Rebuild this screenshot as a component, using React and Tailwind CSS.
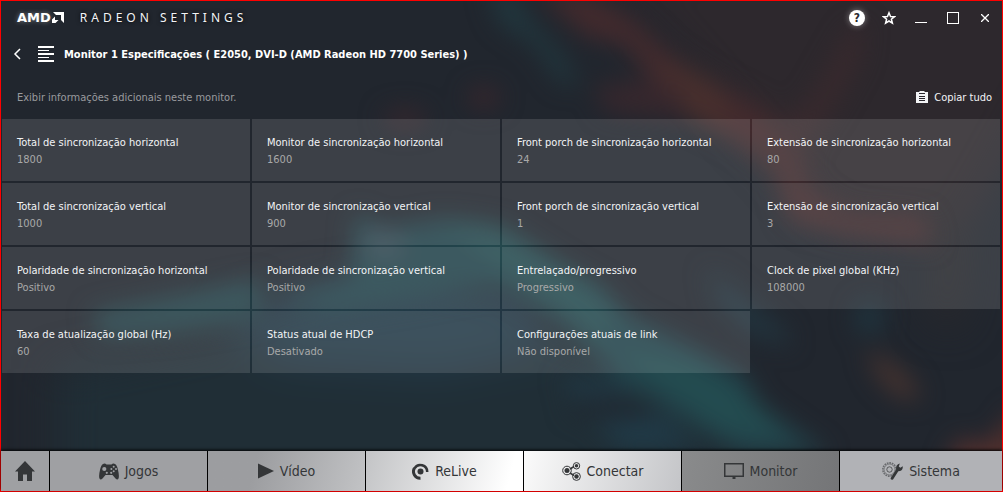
import React from 'react';

const specs = [
  { label: 'Total de sincronização horizontal', value: '1800' },
  { label: 'Monitor de sincronização horizontal', value: '1600' },
  { label: 'Front porch de sincronização horizontal', value: '24' },
  { label: 'Extensão de sincronização horizontal', value: '80' },
  { label: 'Total de sincronização vertical', value: '1000' },
  { label: 'Monitor de sincronização vertical', value: '900' },
  { label: 'Front porch de sincronização vertical', value: '1' },
  { label: 'Extensão de sincronização vertical', value: '3' },
  { label: 'Polaridade de sincronização horizontal', value: 'Positivo' },
  { label: 'Polaridade de sincronização vertical', value: 'Positivo' },
  { label: 'Entrelaçado/progressivo', value: 'Progressivo' },
  { label: 'Clock de pixel global (KHz)', value: '108000' },
  { label: 'Taxa de atualização global (Hz)', value: '60' },
  { label: 'Status atual de HDCP', value: 'Desativado' },
  { label: 'Configurações atuais de link', value: 'Não disponível' },
];

const Backdrop = () => (
  <svg
    className="absolute inset-0 w-full h-full"
    viewBox="0 0 1003 492"
    preserveAspectRatio="none"
    aria-hidden="true"
  >
    <defs>
      <filter id="soft" x="-20%" y="-20%" width="140%" height="140%" colorInterpolationFilters="sRGB">
        <feGaussianBlur stdDeviation="12" />
      </filter>
      <filter id="wide" x="-20%" y="-20%" width="140%" height="140%" colorInterpolationFilters="sRGB">
        <feGaussianBlur stdDeviation="20" />
      </filter>
    </defs>
    <rect width="1003" height="492" fill="#21262e" />
    <g filter="url(#wide)">
      <path d="M600 -40 H1060 V60 L960 240 L830 220 L730 110Z" fill="#2d282d" />
      <path d="M55 370 L400 300 L600 340 L800 500 H55Z" fill="#202e36" />
      <path d="M220 320 L300 290 L420 270 L520 290 L560 350 L440 375 L280 365Z" fill="#233947" />
      <path d="M940 180 L970 250 L960 330 L930 320Z" fill="#29282c" />
    </g>
    <g filter="url(#soft)">
      <path d="M90 312 L180 294 L260 278 L262 318 L180 332 L100 338Z" fill="#224148" />
      <path d="M355 212 L385 228 L440 218 L480 222 L520 238 L560 265 L600 285 L630 315 L690 345 L745 375 L760 405 L830 455 L740 455 L690 425 L620 385 L590 350 L560 320 L500 285 L420 300 L330 315 L280 300 L350 280Z" fill="#22424a" />
      <path d="M440 222 L500 225 L590 282 L620 320 L600 345 L500 270Z" fill="#254b50" />
      <path d="M610 350 L700 365 L750 400 L790 440 L720 430Z" fill="#234c50" />
      <ellipse cx="384" cy="245" rx="20" ry="15" fill="#364a54" />
      <path d="M560 378 L620 385 L700 450 H620Z" fill="#203a47" />
      <ellipse cx="615" cy="408" rx="46" ry="12" fill="#202830" />
      <path d="M708 268 L730 285 L785 330 L792 348 L750 335 L718 305Z" fill="#22343e" />
      <ellipse cx="870" cy="318" rx="14" ry="18" fill="#1f343e" />
      <path d="M488 -10 L515 -10 L530 18 L560 50 L580 85 L560 82 L535 45 L500 22Z" fill="#21373e" />
      <path d="M535 -12 L590 -8 L635 18 L670 52 L710 78 L770 110 L800 150 L812 190 L850 212 L925 216 L935 245 L850 235 L790 222 L775 170 L740 145 L690 118 L655 85 L625 45 L585 35Z" fill="#422a2d" />
      <path d="M655 55 L715 80 L735 125 L700 125 L675 95Z" fill="#482f2d" />
      <path d="M595 84 L640 80 L680 92 L690 120 L605 112Z" fill="#36272d" />
      <ellipse cx="484" cy="97" rx="15" ry="11" fill="#3a262c" />
      <ellipse cx="405" cy="118" rx="22" ry="10" fill="#36272d" />
      <path d="M770 130 L810 100 L850 30 L865 20 L860 60 L835 105 L800 160Z" fill="#38292d" />
      <path d="M866 350 L885 358 L912 380 L922 400 L902 400 L880 380Z" fill="#46332f" />
      <path d="M960 440 L990 445 L1020 405 V470 H945Z" fill="#54302d" />
    </g>
  </svg>
);

const AmdLogo = () => (
  <span className="flex items-center text-white font-bold text-[13px] leading-4 font-['DejaVu_Sans'] [text-shadow:0_0_5px_#ffffff66]">
    AMD
    <svg className="ml-px mb-px w-3 h-[11px]" viewBox="0 0 12 11" fill="currentColor" aria-hidden="true">
      <path d="M1 0H12V11L9 8V3H4Z" />
      <path d="M3 4.500V8H6.500L3.500 11H0V7.500Z" />
    </svg>
  </span>
);

const iconButton = 'w-8 h-8 flex items-center justify-center';

const TitleBar = () => (
  <header className="flex items-center h-[34px] pl-4 pr-px">
    <AmdLogo />
    <h1 className="ml-4 flex-1 text-xs tracking-[4px] font-['Noto_Sans'] text-gray-100 [text-shadow:0_0_4px_#000]">
      RADEON SETTINGS
    </h1>
    <div className="flex text-white">
      <button className={iconButton} aria-label="Ajuda">
        <span className="w-4 h-4 rounded-full bg-white text-[#2b282e] text-xs leading-4 font-bold shadow-[0_0_6px_#ffffff66]">
          ?
        </span>
      </button>
      <button className={iconButton} aria-label="Favoritos">
        <svg width="14" height="14" viewBox="0 0 14 14" fill="none" stroke="currentColor" strokeWidth="1.500">
          <path d="M7 1.800L8.500 5.500L12.500 5.700L9.400 8.200L10.400 12.200L7 10L3.600 12.200L4.600 8.200L1.500 5.700L5.500 5.500Z" />
        </svg>
      </button>
      <button className={iconButton} aria-label="Minimizar">
        <svg width="12" height="12" viewBox="0 0 12 12" fill="currentColor">
          <rect y="10" width="12" height="1" />
        </svg>
      </button>
      <button className={iconButton} aria-label="Maximizar">
        <svg width="12" height="12" viewBox="0 0 12 12" fill="none" stroke="currentColor">
          <rect x="0.500" y="0.500" width="11" height="11" />
        </svg>
      </button>
      <button className={iconButton} aria-label="Fechar">
        <svg width="8" height="8" viewBox="0 0 8 8" fill="none" stroke="currentColor" strokeWidth="1.300">
          <path d="M0 0L8 8M8 0L0 8" />
        </svg>
      </button>
    </div>
  </header>
);

const PageHeading = () => (
  <div className="flex items-center h-[38px] pl-3 text-white">
    <button aria-label="Voltar">
      <svg width="8" height="12" viewBox="0 0 8 12" fill="none" stroke="currentColor" strokeWidth="1.500">
        <path d="M7 1L2 6L7 11" />
      </svg>
    </button>
    <svg className="ml-[17px]" width="16" height="16" viewBox="0 0 16 16" fill="currentColor" aria-hidden="true">
      <rect width="16" height="2" />
      <rect y="4" width="11" height="1" />
      <rect y="7" width="16" height="2" />
      <rect y="11" width="11" height="1" />
      <rect y="14" width="16" height="2" />
    </svg>
    <h2 className="ml-[10px] font-bold">
      Monitor 1 Especificações ( E2050, DVI-D (AMD Radeon HD 7700 Series) )
    </h2>
  </div>
);

const SpecCard = ({ label, value }) => (
  <div className="bg-white/12 px-[15px] pt-[15px] pb-[13px]">
    <dt className="text-gray-100">{label}</dt>
    <dd className="text-[#a9a9a9]">{value}</dd>
  </div>
);

const HomeIcon = () => (
  <svg width="20" height="20" viewBox="0 0 20 20" fill="currentColor" aria-hidden="true">
    <path d="M10 0L20 10.500H17V20H12V13.500H8V20H3V10.500H0Z" />
  </svg>
);

const GamepadIcon = () => (
  <svg width="20" height="17" viewBox="0 0 20 17" aria-hidden="true">
    <path
      fill="currentColor"
      d="M4 1Q6 0 7.500 1.500H12.500Q14 0 16 1Q18 2 19 7Q20.500 13 19.500 15.500Q18.500 17.300 16.500 15.500L13.500 12H6.500L3.500 15.500Q1.500 17.300 0.500 15.500Q-0.500 13 1 7Q2 2 4 1Z"
    />
    <g fill="#9fa0a3">
      <circle cx="5.300" cy="6" r="2.100" />
      <circle cx="14.700" cy="3.700" r="1" />
      <circle cx="14.700" cy="8.300" r="1" />
      <circle cx="12.400" cy="6" r="1" />
      <circle cx="17" cy="6" r="1" />
      <circle cx="7.800" cy="9.800" r="1.100" />
      <circle cx="12.200" cy="9.800" r="1.100" />
    </g>
  </svg>
);

const PlayIcon = () => (
  <svg width="16" height="16" viewBox="0 0 16 16" fill="currentColor" aria-hidden="true">
    <path d="M0 0.500L16 8L0 15.500Z" />
  </svg>
);

const ReliveIcon = () => (
  <svg width="17" height="17" viewBox="0 0 17 17" fill="none" stroke="currentColor" aria-hidden="true">
    <circle cx="8.500" cy="8.500" r="3" fill="currentColor" stroke="none" />
    <path strokeWidth="2.500" d="M2.500 5.500A6.800 6.800 0 0 1 15.200 9" />
    <path strokeWidth="3" d="M2.500 5A6.700 6.700 0 0 0 8.500 15.200" />
  </svg>
);

const ConnectIcon = () => (
  <svg width="19" height="19" viewBox="0 0 19 19" fill="none" stroke="currentColor" aria-hidden="true">
    <path strokeWidth="1.500" d="M8 7L12 4.500M8 11L12 13.500" />
    <circle cx="5" cy="8.500" r="4.300" strokeWidth="1" />
    <circle cx="14.500" cy="3.800" r="3.200" strokeWidth="1" />
    <circle cx="14.500" cy="14.500" r="3.900" strokeWidth="1" />
    <g fill="currentColor" stroke="none">
      <circle cx="5" cy="8.500" r="2.500" />
      <circle cx="14.500" cy="3.800" r="1.700" />
      <circle cx="14.500" cy="14.500" r="2.200" />
    </g>
  </svg>
);

const MonitorIcon = () => (
  <svg width="20" height="16" viewBox="0 0 20 16" aria-hidden="true">
    <rect x="0.750" y="0.750" width="18.500" height="12.500" fill="none" stroke="currentColor" strokeWidth="1.500" />
    <path fill="currentColor" d="M8.500 13H11.500V16H8.500Z" />
  </svg>
);

const SystemIcon = () => (
  <svg width="21" height="18" viewBox="0 0 21 18" fill="none" stroke="currentColor" aria-hidden="true">
    <circle cx="7.500" cy="7.500" r="6.700" strokeWidth="1.400" strokeDasharray="1.700 0.900" opacity="0.600" />
    <circle cx="7.500" cy="7.500" r="5.500" strokeWidth="0.800" opacity="0.600" />
    <circle cx="7.500" cy="7.500" r="2.700" strokeWidth="1" opacity="0.700" />
    <path
      fill="currentColor"
      stroke="none"
      d="M9 15.500L14.200 7.500Q13.500 4 16 2.300L17.800 1.500L16.800 4.500L18.300 5.800L20.800 4.300Q21 8 18 9L16.300 9.200L11.200 17.200Q9.800 18.300 8.900 17.300Q8.300 16.500 9 15.500Z"
    />
  </svg>
);

const tabs = [
  { name: 'Jogos', icon: GamepadIcon, bg: 'bg-[#9fa0a3]' },
  { name: 'Vídeo', icon: PlayIcon, bg: 'bg-linear-105 from-[#9c9da0] from-30% to-[#c2c3c5]' },
  { name: 'ReLive', icon: ReliveIcon, bg: 'bg-linear-105 from-[#c3c4c6] to-white to-90%' },
  { name: 'Conectar', icon: ConnectIcon, bg: 'bg-linear-105 from-[#fbfbfb] to-[#c4c5c8]' },
  { name: 'Monitor', icon: MonitorIcon, bg: 'bg-linear-105 from-[#8a8b8c] to-[#747577]', active: true },
  { name: 'Sistema', icon: SystemIcon, bg: 'bg-[#b1b2b6]' },
];

const BottomNav = () => (
  <nav className="grid grid-cols-[48px_repeat(5,minmax(0,157fr))_minmax(0,162fr)] gap-px h-10 bg-black text-[#343638] text-sm shadow-[0_-1px_3px_#000]">
    <button className="flex items-center justify-center bg-[#9fa0a3]" aria-label="Início">
      <HomeIcon />
    </button>
    {tabs.map(({ name, icon: Icon, bg, active }) => (
      <button
        key={name}
        className={`flex items-center justify-center gap-1.5 ${bg}`}
        aria-current={active ? 'page' : undefined}
      >
        <Icon />
        {name}
      </button>
    ))}
  </nav>
);

const App = () => (
  <div className="relative min-h-screen flex flex-col border border-[#ff0000] bg-[#21262e] text-[11px] leading-[17px] font-['DejaVu_Sans_Condensed','Noto_Sans',sans-serif]">
    <Backdrop />
    <div className="relative flex-1 flex flex-col">
      <TitleBar />
      <PageHeading />
      <main className="flex-1">
        <div className="flex items-center justify-between h-[46px] pt-0.5 pl-4 pr-[10px]">
          <p className="text-[#9a9b9e]">Exibir informações adicionais neste monitor.</p>
          <button className="flex items-center gap-1.5 text-gray-100">
            <svg width="12" height="12" viewBox="0 0 12 12" aria-hidden="true">
              <path fill="currentColor" d="M0 1H3.500V0H8.500V1H12V12H0Z" />
              <path stroke="#2b282e" d="M3 2.500H9M3 5.500H9M3 7.500H9M3 9.500H9" />
            </svg>
            Copiar tudo
          </button>
        </div>
        <dl className="grid grid-cols-4 gap-0.5 pl-px pr-0.5">
          {specs.map((spec) => (
            <SpecCard key={spec.label} label={spec.label} value={spec.value} />
          ))}
        </dl>
      </main>
      <BottomNav />
    </div>
  </div>
);

export default App;
